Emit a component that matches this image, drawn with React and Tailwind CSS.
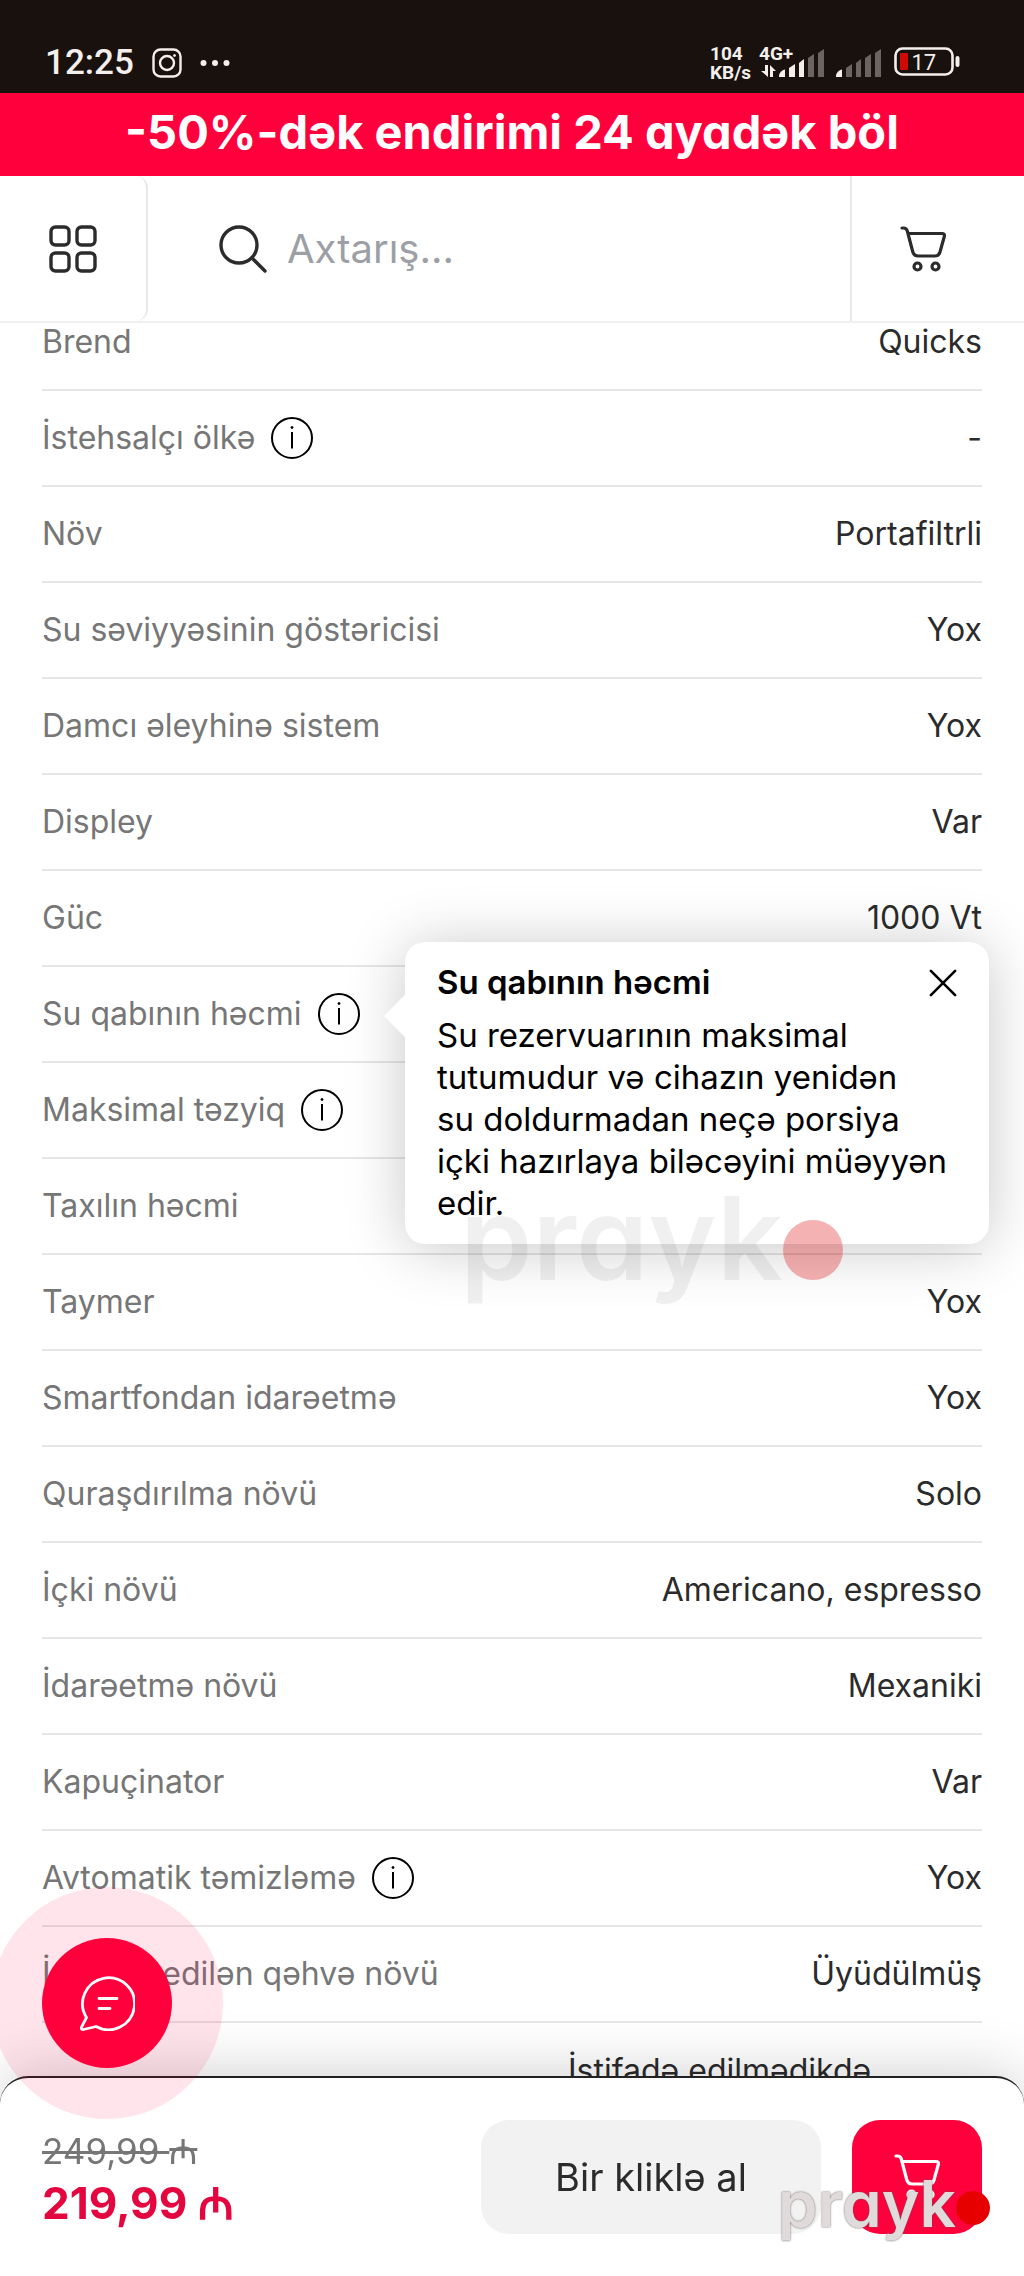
const specs = [
  { label: "Brend", value: "Quicks" },
  { label: "İstehsalçı ölkə", value: "-", info: true },
  { label: "Növ", value: "Portafiltrli" },
  { label: "Su səviyyəsinin göstəricisi", value: "Yox" },
  { label: "Damcı əleyhinə sistem", value: "Yox" },
  { label: "Displey", value: "Var" },
  { label: "Güc", value: "1000 Vt" },
  {
    label: "Su qabının həcmi",
    info: true,
    hint: "Su rezervuarının maksimal\ntutumudur və cihazın yenidən\nsu doldurmadan neçə porsiya\niçki hazırlaya biləcəyini müəyyən\nedir.",
  },
  { label: "Maksimal təzyiq", info: true },
  { label: "Taxılın həcmi" },
  { label: "Taymer", value: "Yox" },
  { label: "Smartfondan idarəetmə", value: "Yox" },
  { label: "Quraşdırılma növü", value: "Solo" },
  { label: "İçki növü", value: "Americano, espresso" },
  { label: "İdarəetmə növü", value: "Mexaniki" },
  { label: "Kapuçinator", value: "Var" },
  { label: "Avtomatik təmizləmə", value: "Yox", info: true },
  { label: "İstifadə edilən qəhvə növü", value: "Üyüdülmüş" },
];

function CartIcon({ className }) {
  return (
    <svg viewBox="0 0 48 48" className={className} fill="none" stroke="currentColor" strokeWidth="3.2" strokeLinecap="round" strokeLinejoin="round">
      <path d="M3 3h1.5c2 0 3.2 1 3.8 3l5.4 20.5c.8 3.2 2.4 4.5 5.3 4.5h17c2.9 0 4.2-1.2 5-4l4.3-15.5c.5-1.9-.3-3-2.3-3H9" />
      <circle cx="18.5" cy="41.5" r="3.5" />
      <circle cx="36.5" cy="41.5" r="3.5" />
    </svg>
  );
}

function Signal({ level }) {
  const bars = [
    "M0 27c0-3 3-6 6-6.5V28H0z",
    "M10 19l6-4v13h-6z",
    "M20 14l5-4v18h-5z",
    "M29 9l6-4v23h-6z",
    "M39 4l6-4v28h-6z",
  ];
  return (
    <svg viewBox="0 0 45 28" className="h-7 w-[45px]">
      {bars.map((d, i) => (
        <path key={d} d={d} fill={i < level ? "#f3efec" : "#6b6461"} />
      ))}
    </svg>
  );
}

function StatusBar() {
  return (
    <div className="flex h-[93px] items-end justify-between bg-[#19110d] pr-16 pl-[45px] font-['Roboto',sans-serif] text-[#f3efec]">
      <div className="flex items-center pb-[10px]">
        <span className="text-[35px] leading-[40px] font-medium">12:25</span>
        <svg viewBox="0 0 30 30" className="ml-[18px] size-[30px]" fill="none" stroke="currentColor" strokeWidth="2.4">
          <rect x="1.5" y="1.5" width="27" height="27" rx="7" />
          <circle cx="15" cy="15" r="7" />
          <circle cx="22.5" cy="7.5" r="1" fill="currentColor" strokeWidth="1" />
        </svg>
        <svg viewBox="0 0 30 8" className="ml-[18px] h-2 w-[30px]" fill="currentColor">
          <circle cx="3.5" cy="4" r="3" />
          <circle cx="15" cy="4" r="3" />
          <circle cx="26.5" cy="4" r="3" />
        </svg>
      </div>
      <div className="flex items-end pb-4">
        <div className="-mb-[5px] text-[19px] leading-[19px] font-bold">
          <div>104</div>
          <div>KB/s</div>
        </div>
        <div className="relative ml-7">
          <span className="absolute bottom-[14px] -left-[20px] text-[19px] leading-[18px] font-bold">4G+</span>
          <svg viewBox="0 0 16 12" className="absolute bottom-0 -left-[18px] h-3 w-4" fill="currentColor">
            <path d="M4 0h3v12L0 6h4zM9 12V0l6 6h-3v6z" />
          </svg>
          <Signal level={3} />
        </div>
        <div className="ml-3">
          <Signal level={1} />
        </div>
        <svg viewBox="0 0 66 30" className="ml-[13px] h-[30px] w-[66px]">
          <rect x="1.5" y="1.5" width="57" height="26" rx="7" fill="none" stroke="#f3efec" strokeWidth="2.6" />
          <rect x="6" y="6" width="8" height="17" rx="1" fill="#cf0a06" />
          <rect x="61.5" y="9" width="4" height="11" rx="2" fill="#f3efec" />
          <text x="17.5" y="23" fontSize="22" fill="#f3efec">17</text>
        </svg>
      </div>
    </div>
  );
}

function Header() {
  return (
    <header className="relative z-10 flex h-[147px] border-b-2 border-[#f0f0f0] bg-white text-[#2b2b2b]">
      <button aria-label="Kataloq" className="flex w-[148px] items-center justify-center rounded-r-xl border-r-2 border-[#e8e8e8]">
        <svg viewBox="0 0 48 48" className="size-12" fill="none" stroke="currentColor" strokeWidth="3.4">
          <rect x="2" y="2" width="18" height="18" rx="4.5" />
          <rect x="28" y="2" width="18" height="18" rx="4.5" />
          <rect x="2" y="28" width="18" height="18" rx="4.5" />
          <rect x="28" y="28" width="18" height="18" rx="4.5" />
        </svg>
      </button>
      <label className="flex min-w-0 flex-1 items-center gap-5 pl-[71px]">
        <svg viewBox="0 0 48 48" className="size-12 shrink-0" fill="none" stroke="currentColor" strokeWidth="3.4" strokeLinecap="round">
          <circle cx="20" cy="20" r="18" />
          <path d="M33 33l13 13" />
        </svg>
        <input
          type="search"
          aria-label="Axtarış"
          placeholder="Axtarış..."
          className="w-full min-w-0 bg-transparent text-[40px] outline-none placeholder:text-[#9d9fa6]"
        />
      </label>
      <a href="#cart" aria-label="Səbət" className="flex w-[174px] items-center justify-center border-l-2 border-[#e8e8e8] pr-[30px]">
        <CartIcon className="size-12" />
      </a>
    </header>
  );
}

function InfoButton({ label }) {
  return (
    <button aria-label={label} className="ml-4 size-[42px] shrink-0 text-black">
      <svg viewBox="0 0 42 42" className="size-full" fill="none" stroke="currentColor" strokeWidth="2">
        <circle cx="21" cy="21" r="20" />
        <path d="M21 15v16.5" />
        <circle cx="21" cy="10.5" r="1" fill="currentColor" strokeWidth="1" />
      </svg>
    </button>
  );
}

function Hint({ title, children }) {
  return (
    <div role="tooltip" className="absolute -top-[25px] -right-[7px] left-[363px] z-10 rounded-[20px] bg-white pt-5 pr-7 pb-5 pl-8 text-black shadow-[0_4px_60px_rgba(0,0,0,0.22)]">
      <div className="absolute top-[59px] -left-[15px] size-[30px] rotate-45 bg-white" />
      <div className="relative flex h-[42px] items-center justify-between">
        <h2 className="text-[33px] font-semibold">{title}</h2>
        <button aria-label="Bağla" className="pr-1">
          <svg viewBox="0 0 30 30" className="size-[28px]" stroke="currentColor" strokeWidth="2.8" strokeLinecap="round">
            <path d="M2 2l26 26M28 2L2 28" />
          </svg>
        </button>
      </div>
      <p className="relative mt-[10px] text-[33px] leading-[42px] whitespace-pre-line">{children}</p>
    </div>
  );
}

function SpecRow({ label, value, info, hint }) {
  return (
    <li className="relative flex h-24 items-center justify-between border-b-2 border-[#e6e6e6]">
      <span className="flex items-center text-[#767676]">
        {label}
        {info && <InfoButton label={label} />}
      </span>
      {value && <span>{value}</span>}
      {hint && <Hint title={label}>{hint}</Hint>}
    </li>
  );
}

function ChatButton() {
  return (
    <div className="fixed bottom-[157px] -left-[9px] z-30 flex size-[232px] items-center justify-center rounded-full bg-[#ff003c]/10">
      <button aria-label="Söhbət" className="flex size-[130px] items-center justify-center rounded-full bg-[#ff003c] text-white">
        <svg viewBox="0 0 56 56" className="size-14" fill="none" stroke="currentColor" strokeWidth="2.8" strokeLinecap="round" strokeLinejoin="round">
          <path d="M7.5 42.5A26 26 0 1 1 17 51.5L4.5 54.5C2.8 54.8 2 54 2.4 52.3z" />
          <path d="M20 23.5h18M20 33.5h11" />
        </svg>
      </button>
    </div>
  );
}

function Manat() {
  return <span className="font-['Open_Sans','Liberation_Sans',sans-serif]">₼</span>;
}

function BuyBar() {
  return (
    <footer className="fixed inset-x-0 bottom-0 z-20 flex h-[200px] items-start rounded-t-[28px] border-t-2 border-[#222] bg-white px-[42px] pt-[42px] shadow-[0_-4px_60px_rgba(0,0,0,0.18)]">
      <div className="flex-1 pt-2">
        <del className="block h-[46px] text-[35px] leading-[46px] text-[#767676]">
          249,99 <Manat />
        </del>
        <strong className="block h-[56px] text-[44px] leading-[56px] font-bold text-[#e3063f]">
          219,99 <Manat />
        </strong>
      </div>
      <button className="h-[114px] w-[340px] rounded-[28px] bg-[#f2f2f2] text-[38px]">Bir kliklə al</button>
      <button aria-label="Səbətə at" className="ml-[31px] flex h-[114px] w-[130px] items-center justify-center rounded-[28px] bg-[#ff003c] text-white">
        <CartIcon className="size-12" />
      </button>
    </footer>
  );
}

export default function App() {
  return (
    <div className="min-h-screen overflow-hidden bg-white font-['Inter','Noto_Sans',sans-serif] text-[#2b2b2b]">
      <StatusBar />
      <div className="flex h-[83px] items-center justify-center bg-[#ff003c] pb-1 text-[47px] font-bold text-white [font-feature-settings:'cv11']">
        -50%-dək endirimi 24 ayadək böl
      </div>
      <Header />
      <main className="-mt-[28px] px-[42px] text-[32px]">
        <ul>
          {specs.map((spec) => (
            <SpecRow key={spec.label} {...spec} />
          ))}
          <li className="flex h-24 items-center justify-end">
            <span className="w-[414px]">İstifadə edilmədikdə</span>
          </li>
        </ul>
      </main>
      <BuyBar />
      <ChatButton />
      <div className="pointer-events-none absolute top-[1163px] left-[460px] z-10 flex items-center text-[116px] leading-[150px] font-semibold text-black/[0.06] [font-feature-settings:'cv11']">
        prayk
        <span className="mt-6 size-[60px] rounded-full bg-[#e00000]/30" />
      </div>
      <div className="pointer-events-none fixed right-[34px] bottom-[32px] z-40 flex items-center text-[64px] leading-[80px] font-semibold text-[#e0dada] [font-feature-settings:'cv11'] [text-shadow:0_0_2px_#555]">
        prayk
        <span className="mt-2 size-[34px] rounded-full bg-[#e60000]" />
      </div>
    </div>
  );
}
